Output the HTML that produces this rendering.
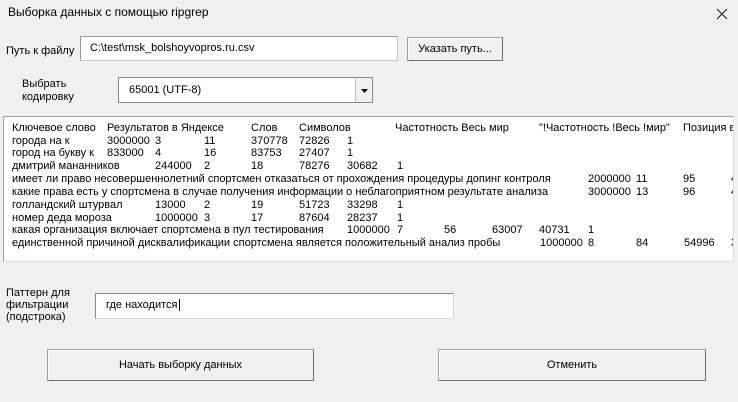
<!DOCTYPE html>
<html><head><meta charset="utf-8"><style>
*{margin:0;padding:0;box-sizing:border-box}
body{width:738px;height:402px;background:#f0f0f0;font-family:"Liberation Sans","DejaVu Sans",sans-serif;font-size:11px;color:#000;position:relative;overflow:hidden}
.a{position:absolute;white-space:nowrap}
.tb{position:absolute;background:#fff;border:1px solid #c8c8c8;border-top-color:#9a9a9a;border-left-color:#9a9a9a}
.btn{position:absolute;background:#f0f0f0;border:1px solid #a0a0a0;border-right-color:#707070;border-bottom-color:#707070;box-shadow:inset 1px 1px 0 #fff;text-align:center}
#lb{position:absolute;left:3px;top:116px;width:731px;height:146px;background:#fff;border:1px solid #a0a0a0;border-right-color:#e0e0e0;border-bottom-color:#e0e0e0;overflow:hidden}
#lb .a{line-height:12px}
</style></head><body>
<div class="a" style="left:8px;top:5px;font-size:12px">Выборка данных с помощью ripgrep</div>
<svg class="a" style="left:716px;top:8px" width="12" height="12"><path d="M1 1L11 11M11 1L1 11" stroke="#222" stroke-width="1.1"/></svg>

<div class="a" style="left:6px;top:45px">Путь к файлу</div>
<div class="tb" style="left:80px;top:36px;width:318px;height:25px"><div class="a" style="left:9px;top:5px">C:\test\msk_bolshoyvopros.ru.csv</div></div>
<div class="btn" style="left:407px;top:37px;width:96px;height:24px;line-height:22px">Указать путь...</div>

<div class="a" style="left:22px;top:78px;line-height:13px">Выбрать<br>кодировку</div>
<div class="tb" style="left:118px;top:77px;width:255px;height:26px;border-color:#8a8a8a"><div class="a" style="left:10px;top:6px">65001 (UTF-8)</div>
<div class="a" style="left:236px;top:0;width:17px;height:24px;border-left:1px solid #c0c0c0;background:#f0f0f0"><svg width="17" height="24"><path d="M5 11h7l-3.5 4z" fill="#000"/></svg></div></div>

<div id="lb">
<div style="position:absolute;left:-3px;top:-116px">
<div class="a" style="top:121px;left:11px">Ключевое слово</div><div class="a" style="top:121px;left:106px">Результатов в Яндексе</div><div class="a" style="top:121px;left:250px">Слов</div><div class="a" style="top:121px;left:298px">Символов</div><div class="a" style="top:121px;left:394px">Частотность Весь мир</div><div class="a" style="top:121px;left:538px">"!Частотность !Весь !мир"</div><div class="a" style="top:121px;left:682px">Позиция в</div>

<div class="a" style="top:134px;left:11px">города на к</div><div class="a" style="top:134px;left:106px">3000000</div><div class="a" style="top:134px;left:154px">3</div><div class="a" style="top:134px;left:203px">11</div><div class="a" style="top:134px;left:250px">370778</div><div class="a" style="top:134px;left:298px">72826</div><div class="a" style="top:134px;left:346px">1</div>

<div class="a" style="top:146px;left:11px">город на букву к</div><div class="a" style="top:146px;left:106px">833000</div><div class="a" style="top:146px;left:154px">4</div><div class="a" style="top:146px;left:203px">16</div><div class="a" style="top:146px;left:250px">83753</div><div class="a" style="top:146px;left:298px">27407</div><div class="a" style="top:146px;left:346px">1</div>

<div class="a" style="top:159px;left:11px">дмитрий мананников</div><div class="a" style="top:159px;left:154px">244000</div><div class="a" style="top:159px;left:203px">2</div><div class="a" style="top:159px;left:250px">18</div><div class="a" style="top:159px;left:298px">78276</div><div class="a" style="top:159px;left:346px">30682</div><div class="a" style="top:159px;left:396px">1</div>

<div class="a" style="top:172px;left:11px">имеет ли право несовершеннолетний спортсмен отказаться от прохождения процедуры допинг контроля</div><div class="a" style="top:172px;left:587px">2000000</div><div class="a" style="top:172px;left:635px">11</div><div class="a" style="top:172px;left:682px">95</div><div class="a" style="top:172px;left:730px">4</div>

<div class="a" style="top:185px;left:11px">какие права есть у спортсмена в случае получения информации о неблагоприятном результате анализа</div><div class="a" style="top:185px;left:587px">3000000</div><div class="a" style="top:185px;left:635px">13</div><div class="a" style="top:185px;left:682px">96</div><div class="a" style="top:185px;left:730px">4</div>

<div class="a" style="top:198px;left:11px">голландский штурвал</div><div class="a" style="top:198px;left:154px">13000</div><div class="a" style="top:198px;left:203px">2</div><div class="a" style="top:198px;left:250px">19</div><div class="a" style="top:198px;left:298px">51723</div><div class="a" style="top:198px;left:346px">33298</div><div class="a" style="top:198px;left:396px">1</div>

<div class="a" style="top:211px;left:11px">номер деда мороза</div><div class="a" style="top:211px;left:154px">1000000</div><div class="a" style="top:211px;left:203px">3</div><div class="a" style="top:211px;left:250px">17</div><div class="a" style="top:211px;left:298px">87604</div><div class="a" style="top:211px;left:346px">28237</div><div class="a" style="top:211px;left:396px">1</div>

<div class="a" style="top:223px;left:11px">какая организация включает спортсмена в пул тестирования</div><div class="a" style="top:223px;left:346px">1000000</div><div class="a" style="top:223px;left:396px">7</div><div class="a" style="top:223px;left:443px">56</div><div class="a" style="top:223px;left:491px">63007</div><div class="a" style="top:223px;left:538px">40731</div><div class="a" style="top:223px;left:587px">1</div>

<div class="a" style="top:236px;left:11px">единственной причиной дисквалификации спортсмена является положительный анализ пробы</div><div class="a" style="top:236px;left:539px">1000000</div><div class="a" style="top:236px;left:587px">8</div><div class="a" style="top:236px;left:635px">84</div><div class="a" style="top:236px;left:683px">54996</div><div class="a" style="top:236px;left:730px">3</div>
</div></div>

<div class="a" style="left:6px;top:287px;line-height:12px">Паттерн для<br>фильтрации<br>(подстрока)</div>
<div class="tb" style="left:95px;top:293px;width:359px;height:26px;border-color:#8a8a8a;border-right-color:#d8d8d8;border-bottom-color:#d8d8d8"><div class="a" style="left:10px;top:5px">где находится<span style="border-left:1px solid #000;margin-left:1px"></span></div></div>

<div class="btn" style="left:47px;top:349px;width:267px;height:32px;line-height:30px">Начать выборку данных</div>
<div class="btn" style="left:438px;top:349px;width:268px;height:32px;line-height:30px">Отменить</div>
</body></html>
